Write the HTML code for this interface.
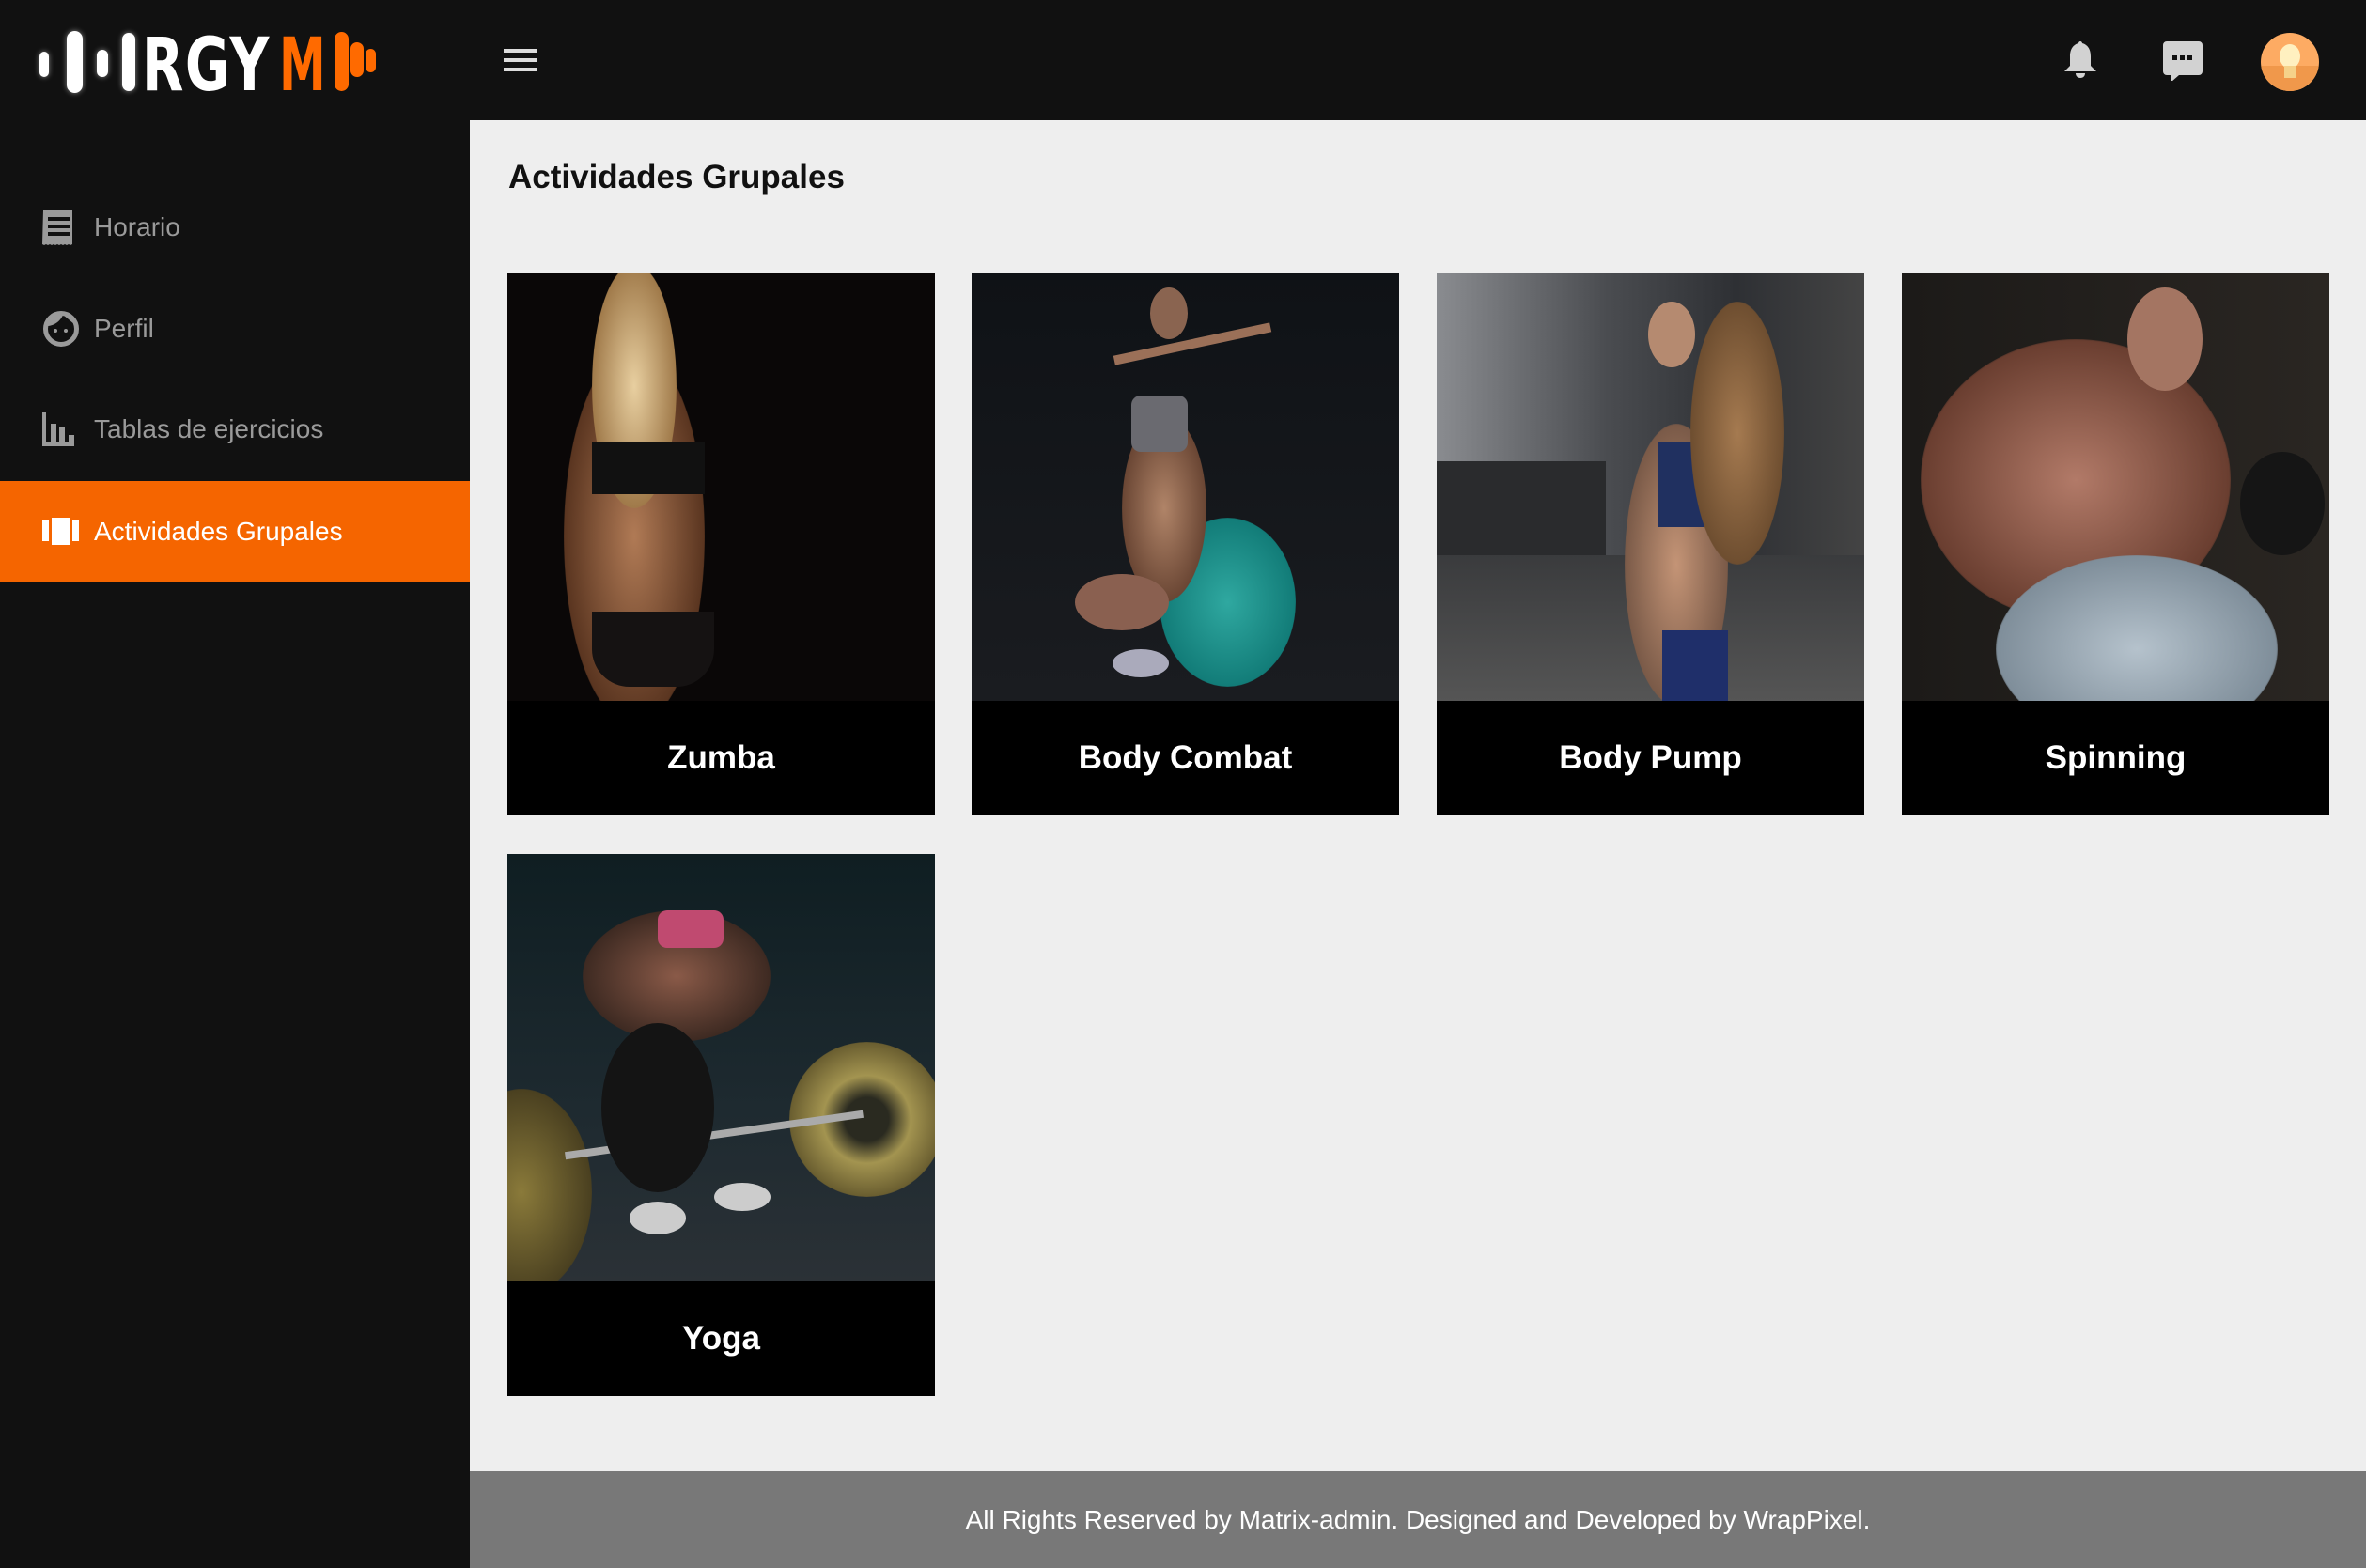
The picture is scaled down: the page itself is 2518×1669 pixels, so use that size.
<!DOCTYPE html>
<html><head><meta charset="utf-8"><style>
*{margin:0;padding:0;box-sizing:border-box}
body{width:2518px;height:1669px;background:#eeeeee;font-family:"Liberation Sans",sans-serif;position:relative;overflow:hidden}
.top{position:absolute;left:0;top:0;width:2518px;height:128px;background:#111}
.side{position:absolute;left:0;top:128px;width:500px;height:1541px;background:#111}
.item{position:absolute;left:0;width:500px;height:107px;color:#9a9a9a;font-size:28px;display:flex;align-items:center}
.item span{position:absolute;left:100px}
.item svg{position:absolute;left:45px}
.active{background:#f56500;color:#fff}
h1{position:absolute;left:541px;top:169px;font-size:35px;font-weight:bold;color:#111}
.card{position:absolute;width:455px;height:577px;background:#000;overflow:hidden}
.img{position:absolute;left:0;top:0;width:455px;height:455px;overflow:hidden}
.lbl{position:absolute;left:0;top:455px;width:455px;height:122px;color:#fff;font-size:35px;font-weight:bold;text-align:center;line-height:122px}
.b{position:absolute;border-radius:50%}
.foot{position:absolute;left:500px;top:1566px;width:2018px;height:103px;background:#787878;color:#fff;font-size:28px;text-align:center;line-height:103px}
.bar{position:absolute;background:#fff;border-radius:9px;box-shadow:0 0 6px rgba(255,255,255,.5)}
.lg{position:absolute;top:31px;font-size:78px;font-weight:bold;font-family:'DejaVu Sans',sans-serif;line-height:78px;transform-origin:left;white-space:nowrap}
</style></head><body>
<div class="top">
 <div class="bar" style="left:42px;top:55px;width:10px;height:27px"></div>
 <div class="bar" style="left:71px;top:33px;width:17px;height:66px"></div>
 <div class="bar" style="left:103px;top:53px;width:12px;height:29px"></div>
 <div class="bar" style="left:130px;top:35px;width:14px;height:62px"></div>
 <div class="lg" style="left:151px;color:#fff;transform:scaleX(.74);letter-spacing:2px">RGY</div>
 <div class="lg" style="left:297px;color:#ff6a00;transform:scaleX(.64)">M</div>
 <div class="bar" style="left:356px;top:34px;width:15px;height:63px;background:#ff6a00;box-shadow:none"></div>
 <div class="bar" style="left:373px;top:45px;width:14px;height:37px;background:#ff6a00;box-shadow:none"></div>
 <div class="bar" style="left:389px;top:52px;width:11px;height:25px;background:#ff6a00;box-shadow:none"></div>
 <div style="position:absolute;left:536px;top:52px;width:36px;height:4px;background:#ddd;box-shadow:0 10px 0 #ddd,0 20px 0 #ddd"></div>
 <svg style="position:absolute;left:2196px;top:42px" width="36" height="44" viewBox="0 0 36 44"><path d="M18 2c1 0 2 1 2 2 7 2 9 8 9 14v10l6 6H1l6-6V18c0-6 2-12 9-14 0-1 1-2 2-2z" fill="#d2d2d2"/><path d="M13 36h10c0 3-2 5-5 5s-5-2-5-5z" fill="#d2d2d2"/></svg>
 <svg style="position:absolute;left:2302px;top:44px" width="42" height="42" viewBox="0 0 42 42"><path d="M4 0h34a4 4 0 0 1 4 4v28a4 4 0 0 1-4 4H17l-8 7v-7H4a4 4 0 0 1-4-4V4a4 4 0 0 1 4-4z" fill="#d2d2d2"/><rect x="10" y="15" width="5" height="5" fill="#111"/><rect x="18" y="15" width="5" height="5" fill="#111"/><rect x="26" y="15" width="5" height="5" fill="#111"/></svg>
 <div style="position:absolute;left:2406px;top:35px;width:62px;height:62px;border-radius:50%;background:#fdab63;overflow:hidden"><div style="position:absolute;left:0;top:35px;width:62px;height:27px;background:#f0984b"></div><div style="position:absolute;left:20px;top:12px;width:22px;height:26px;border-radius:50%;background:#fff0c0"></div><div style="position:absolute;left:25px;top:35px;width:12px;height:13px;background:#f5d28a"></div></div>
</div>
<div class="side">
 <div class="item" style="top:60px"><svg width="36" height="40" viewBox="0 0 36 40"><path d="M1 2l2-1 2 1 2-1 2 1 2-1 2 1 2-1 2 1 2-1 2 1 2-1 2 1 2-1 2 1 2-1 1 1v36l-2 1-2-1-2 1-2-1-2 1-2-1-2 1-2-1-2 1-2-1-2 1-2-1-2 1-2-1-2 1-2-1z" fill="#9a9a9a"/><rect x="6" y="9" width="23" height="4" fill="#111"/><rect x="6" y="17" width="23" height="4" fill="#111"/><rect x="6" y="25" width="23" height="4" fill="#111"/></svg><span>Horario</span></div>
 <div class="item" style="top:168px"><svg width="40" height="40" viewBox="0 0 40 40"><circle cx="20" cy="20" r="16.5" fill="none" stroke="#9a9a9a" stroke-width="5"/><path d="M5 17c6 0 14-4 17-12l12 10 2-2C33 5 26 2 20 2 11 2 5 9 5 17z" fill="#9a9a9a"/><circle cx="14" cy="22" r="2" fill="#9a9a9a"/><circle cx="25" cy="22" r="2" fill="#9a9a9a"/></svg><span>Perfil</span></div>
 <div class="item" style="top:275px"><svg width="40" height="36" viewBox="0 0 40 36"><path d="M0 0h4v32h5V12h6v20h3V16h6v16h4v-8h6v12H0z" fill="#9a9a9a"/></svg><span>Tablas de ejercicios</span></div>
 <div class="item active" style="top:384px"><svg width="40" height="30" viewBox="0 0 40 30"><rect x="0" y="3" width="7" height="22" fill="#fff"/><rect x="10" y="0" width="19" height="29" fill="#fff"/><rect x="32" y="3" width="7" height="22" fill="#fff"/></svg><span>Actividades Grupales</span></div>
</div>
<h1>Actividades Grupales</h1>

<div class="card" style="left:540px;top:291px"><div class="img" style="background:#0a0707">
 <div class="b" style="left:60px;top:80px;width:150px;height:400px;background:radial-gradient(#b07a55,#5a3520 70%,transparent 72%)"></div>
 <div class="b" style="left:90px;top:-10px;width:90px;height:260px;background:radial-gradient(#e8cfa0,#a07a4a 70%,transparent 72%)"></div>
 <div style="position:absolute;left:90px;top:180px;width:120px;height:55px;background:#111"></div>
 <div style="position:absolute;left:90px;top:360px;width:130px;height:80px;background:#151212;border-radius:0 0 40px 40px"></div>
</div><div class="lbl">Zumba</div></div>

<div class="card" style="left:1034px;top:291px"><div class="img" style="background:linear-gradient(#0f1216,#1a1c20)">
 <div class="b" style="left:200px;top:260px;width:145px;height:180px;background:radial-gradient(#2fa8a0,#127c78 70%,transparent 72%)"></div>
 <div class="b" style="left:160px;top:150px;width:90px;height:200px;background:radial-gradient(#b08468,#6a4634 70%,transparent 72%)"></div>
 <div style="position:absolute;left:170px;top:130px;width:60px;height:60px;background:#6a6a70;border-radius:10px"></div>
 <div class="b" style="left:190px;top:15px;width:40px;height:55px;background:#8a6450"></div>
 <div style="position:absolute;left:150px;top:70px;width:170px;height:10px;background:#9b7058;transform:rotate(-12deg)"></div>
 <div class="b" style="left:110px;top:320px;width:100px;height:60px;background:#8a6050"></div>
 <div class="b" style="left:150px;top:400px;width:60px;height:30px;background:#aab"></div>
</div><div class="lbl">Body Combat</div></div>

<div class="card" style="left:1529px;top:291px"><div class="img" style="background:linear-gradient(90deg,#8a8c90,#4a4c50 40%,#2e3034 70%,#444)">
 <div style="position:absolute;left:0;top:200px;width:180px;height:255px;background:#2a2b2d"></div>
 <div style="position:absolute;left:0;top:300px;width:455px;height:155px;background:linear-gradient(#3a3b3d,#555)"></div>
 <div class="b" style="left:200px;top:160px;width:110px;height:300px;background:radial-gradient(#c49476,#7a5a48 70%,transparent 72%)"></div>
 <div style="position:absolute;left:235px;top:180px;width:70px;height:90px;background:#203060"></div>
 <div style="position:absolute;left:240px;top:380px;width:70px;height:75px;background:#1f2f6a"></div>
 <div class="b" style="left:270px;top:30px;width:100px;height:280px;background:radial-gradient(#a57a50,#6e4e30 70%,transparent 72%)"></div>
 <div class="b" style="left:225px;top:30px;width:50px;height:70px;background:#b58a70"></div>
</div><div class="lbl">Body Pump</div></div>

<div class="card" style="left:2024px;top:291px"><div class="img" style="background:linear-gradient(90deg,#1c1a18,#2a2622)">
 <div class="b" style="left:20px;top:70px;width:330px;height:300px;background:radial-gradient(#b27a68,#6a3e30 70%,transparent 72%)"></div>
 <div class="b" style="left:240px;top:15px;width:80px;height:110px;background:#a47562"></div>
 <div class="b" style="left:100px;top:300px;width:300px;height:200px;background:radial-gradient(#b5c2cc,#7f8e9a 70%,transparent 72%)"></div>
 <div class="b" style="left:360px;top:190px;width:90px;height:110px;background:#151515"></div>
</div><div class="lbl">Spinning</div></div>

<div class="card" style="left:540px;top:909px"><div class="img" style="background:linear-gradient(#0f1e22,#1e2a30 60%,#2b3136)">
 <div class="b" style="left:-60px;top:250px;width:150px;height:220px;background:radial-gradient(#8a7a3a,#4a4020 70%,transparent 72%)"></div>
 <div class="b" style="left:300px;top:200px;width:165px;height:165px;background:radial-gradient(#2a2a20 20%,#a39450 40%,#6a5e30 70%,transparent 72%)"></div>
 <div style="position:absolute;left:60px;top:295px;width:320px;height:8px;background:#aaa;transform:rotate(-8deg)"></div>
 <div class="b" style="left:80px;top:60px;width:200px;height:140px;background:radial-gradient(#8a5a48,#3e2a22 70%,transparent 72%)"></div>
 <div style="position:absolute;left:160px;top:60px;width:70px;height:40px;background:#c04a70;border-radius:10px"></div>
 <div class="b" style="left:100px;top:180px;width:120px;height:180px;background:#141414"></div>
 <div class="b" style="left:130px;top:370px;width:60px;height:35px;background:#ccc"></div>
 <div class="b" style="left:220px;top:350px;width:60px;height:30px;background:#ccc"></div>
</div><div class="lbl">Yoga</div></div>

<div class="foot">All Rights Reserved by Matrix-admin. Designed and Developed by WrapPixel.</div>
</body></html>
